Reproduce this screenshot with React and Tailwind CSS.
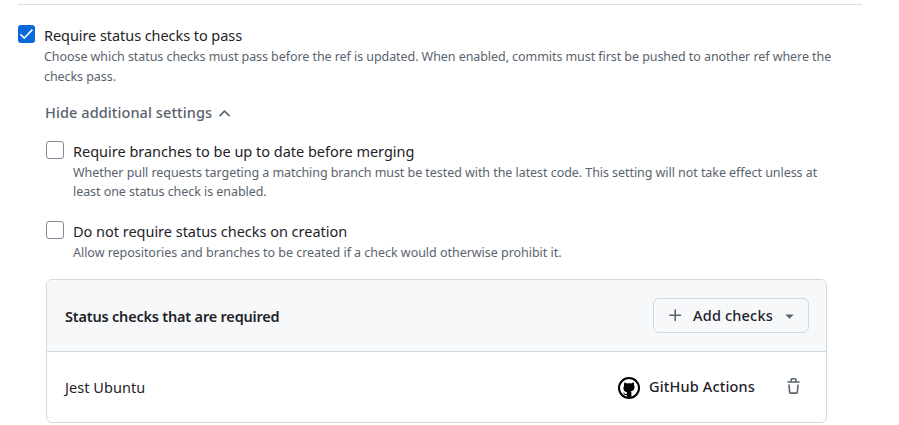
import React from "react";

function Checkbox({ checked = false }) {
  return (
    <span
      role="checkbox"
      aria-checked={checked}
      className={
        checked
          ? "flex h-[18px] w-[17px] shrink-0 items-center justify-center rounded-[3px] bg-[#0969da]"
          : "block size-[18px] shrink-0 rounded-[3px] border border-[#818b98] bg-white"
      }
    >
      {checked && (
        <svg viewBox="0 0 17 18" className="h-[18px] w-[17px]" fill="none" stroke="white" strokeWidth="1.6">
          <path d="M2.4 9.2 6.2 13 14.4 4.6" />
        </svg>
      )}
    </span>
  );
}

function Icon({ d, className }) {
  return (
    <svg viewBox="0 0 16 16" fill="currentColor" className={className}>
      <path d={d} />
    </svg>
  );
}

const CHEVRON_UP =
  "M3.22 10.53a.749.749 0 0 1 0-1.06l4.25-4.25a.749.749 0 0 1 1.06 0l4.25 4.25a.749.749 0 1 1-1.06 1.06L8 6.811 4.28 10.53a.749.749 0 0 1-1.06 0Z";
const PLUS =
  "M7.75 2a.75.75 0 0 1 .75.75V7h4.25a.75.75 0 0 1 0 1.5H8.5v4.25a.75.75 0 0 1-1.5 0V8.5H2.75a.75.75 0 0 1 0-1.5H7V2.75A.75.75 0 0 1 7.75 2Z";
const TRIANGLE_DOWN =
  "m4.427 7.427 3.396 3.396a.25.25 0 0 0 .354 0l3.396-3.396A.25.25 0 0 0 11.396 7H4.604a.25.25 0 0 0-.177.427Z";
const TRASH =
  "M11 1.75V3h2.25a.75.75 0 0 1 0 1.5H2.75a.75.75 0 0 1 0-1.5H5V1.75C5 .784 5.784 0 6.75 0h2.5C10.216 0 11 .784 11 1.75ZM4.496 6.675l.66 6.6a.25.25 0 0 0 .249.225h5.19a.25.25 0 0 0 .249-.225l.66-6.6a.75.75 0 0 1 1.492.149l-.66 6.6A1.748 1.748 0 0 1 10.595 15h-5.19a1.75 1.75 0 0 1-1.741-1.575l-.66-6.6a.75.75 0 1 1 1.492-.15ZM6.5 1.75V3h3V1.75a.25.25 0 0 0-.25-.25h-2.5a.25.25 0 0 0-.25.25Z";

function GitHubAvatar() {
  return (
    <svg viewBox="0 0 22 22" className="size-[22px]">
      <circle cx="11" cy="11" r="10" fill="white" stroke="black" strokeWidth="2" />
      <path d="M6.2 5.6c1 0 1.9.4 2.6.9 1.5-.3 2.9-.3 4.4 0 .7-.5 1.6-.9 2.6-.9.3.8.3 1.6.1 2.3.5.6.7 1.3.7 2.2 0 2.6-1.4 3.8-3.7 4.1.4.4.5.9.5 1.5V21H8.7v-3c-1.600.2-2.300-.2-2.800-1-.3-.5-.5-.8-.9-1.100 1-.2 1.500.4 1.900.8.5.5 1 .5 1.800.3 0-.9.1-1.400.4-1.800-2.300-.3-3.700-1.500-3.700-4.100 0-.9.2-1.600.7-2.200-.2-.7-.2-1.500.1-2.300Z" />
    </svg>
  );
}

export default function App() {
  return (
    <main className="h-[425px] w-[899px] overflow-hidden bg-white pl-[18px] pt-1 font-['Noto_Sans','Open_Sans',sans-serif] text-[#1f2328]">
      <hr className="w-[844px] border-t border-[#dae0e7]" />

      <section className="mt-5 flex gap-[9px]">
        <Checkbox checked />
        <div className="w-[800px]">
          <h2 className="mb-[2px] text-[14.5px] leading-[20px] tracking-[-0.065px]">Require status checks to pass</h2>
          <p className="whitespace-nowrap text-[12.5px] leading-[20px] tracking-[-0.066px] text-[#59636e]">
            Choose which status checks must pass before the ref is updated. When enabled, commits must first be pushed to another ref where the
            <br />
            checks pass.
          </p>
        </div>
      </section>

      <section className="pl-7">
        <button className="mt-[15px] flex h-[22px] items-center gap-1 text-[14.5px] font-medium tracking-[0.09px] text-[#59636e]">
          <span className="-ml-px whitespace-nowrap">Hide additional settings</span>
          <Icon d={CHEVRON_UP} className="size-[17px]" />
        </button>

        <div className="mt-[17px] flex gap-[9px]">
          <Checkbox />
          <div>
            <h3 className="mb-[2px] whitespace-nowrap text-[14.5px] leading-[20px] tracking-[-0.01px]">Require branches to be up to date before merging</h3>
            <p className="whitespace-nowrap text-[12.5px] leading-[19px] tracking-[-0.057px] text-[#59636e]">
              Whether pull requests targeting a matching branch must be tested with the latest code. This setting will not take effect unless at
              <br />
              least one status check is enabled.
            </p>
          </div>
        </div>

        <div className="mt-5 flex gap-[9px]">
          <Checkbox />
          <div>
            <h3 className="mb-[2px] whitespace-nowrap text-[14.5px] leading-[20px] tracking-[-0.02px]">Do not require status checks on creation</h3>
            <p className="whitespace-nowrap text-[12.5px] leading-[19px] tracking-[-0.03px] text-[#59636e]">
              Allow repositories and branches to be created if a check would otherwise prohibit it.
            </p>
          </div>
        </div>

        <div className="mt-[17px] h-[144px] w-[781px] overflow-hidden rounded-[6px] border border-[#d1d9e0]">
          <div className="flex h-[72px] items-center justify-between border-b border-[#d1d9e0] bg-[#f6f8fa] pl-[18px] pr-[17px]">
            <h3 className="whitespace-nowrap pt-[2px] text-[14.5px] font-semibold tracking-[-0.2px]">Status checks that are required</h3>
            <button className="flex h-[35px] w-[156px] items-center rounded-[6px] border border-[#d1d9e0] bg-[#f6f8fa] pl-[13px] text-[14.5px] font-medium tracking-[0.18px]">
              <Icon d={PLUS} className="size-[17px] text-[#59636e]" />
              <span className="ml-2 w-[82px] whitespace-nowrap">Add checks</span>
              <Icon d={TRIANGLE_DOWN} className="ml-[7px] size-[17px] text-[#59636e]" />
            </button>
          </div>
          <div className="flex h-[71px] items-center pl-[18px] pr-6">
            <span className="whitespace-nowrap text-[14.5px] tracking-[0.05px]">Jest Ubuntu</span>
            <span className="ml-auto"><GitHubAvatar /></span>
            <span className="ml-[9px] w-[106px] whitespace-nowrap pb-[2px] text-[14.5px] font-medium tracking-[0.15px]">GitHub Actions</span>
            <Icon d={TRASH} className="mb-[2px] ml-[30px] size-[17px] text-[#59636e]" />
          </div>
        </div>
      </section>
    </main>
  );
}
